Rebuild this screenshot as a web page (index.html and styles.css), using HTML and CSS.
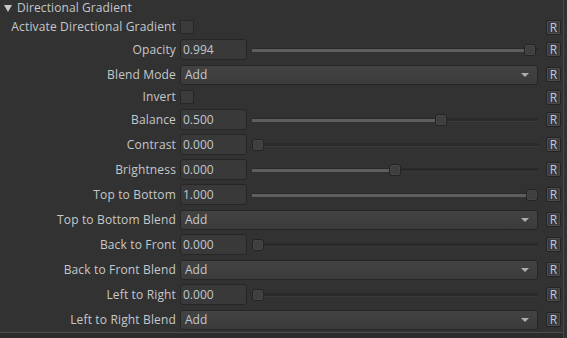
FILE: index.html
```html
<!DOCTYPE html>
<html>
<head>
<meta charset="utf-8">
<link rel="stylesheet" href="styles.css">
</head>
<body>
<div class="panel">
  <div class="header"><span class="tri"></span><span class="title">Directional Gradient</span></div>
  <div class="rows">
    <div class="row short"><div class="label">Activate Directional Gradient</div><div class="ctrl"><span class="check"></span></div><div class="rbtn">R</div></div>
    <div class="row"><div class="label">Opacity</div><div class="ctrl"><div class="num">0.994</div><div class="slider"><div class="track"><div class="fill" style="width: calc((100% - 12px) * 0.994 + 6px)"></div></div><div class="handle" style="left: calc((100% - 12px) * 0.994)"></div></div></div><div class="rbtn">R</div></div>
    <div class="row"><div class="label">Blend Mode</div><div class="ctrl"><div class="drop"><span>Add</span><span class="arrow"></span></div></div><div class="rbtn">R</div></div>
    <div class="row short"><div class="label">Invert</div><div class="ctrl"><span class="check"></span></div><div class="rbtn">R</div></div>
    <div class="row"><div class="label">Balance</div><div class="ctrl"><div class="num">0.500</div><div class="slider"><div class="track"><div class="fill" style="width: calc((100% - 12px) * 0.667 + 6px)"></div></div><div class="handle" style="left: calc((100% - 12px) * 0.667)"></div></div></div><div class="rbtn">R</div></div>
    <div class="row"><div class="label">Contrast</div><div class="ctrl"><div class="num">0.000</div><div class="slider"><div class="track"><div class="fill" style="width: 0px"></div></div><div class="handle" style="left: 0px"></div></div></div><div class="rbtn">R</div></div>
    <div class="row"><div class="label">Brightness</div><div class="ctrl"><div class="num">0.000</div><div class="slider"><div class="track"><div class="fill" style="width: calc((100% - 12px) * 0.5 + 6px)"></div></div><div class="handle" style="left: calc((100% - 12px) * 0.5)"></div></div></div><div class="rbtn">R</div></div>
    <div class="row"><div class="label">Top to Bottom</div><div class="ctrl"><div class="num">1.000</div><div class="slider"><div class="track"><div class="fill" style="width: calc(100% - 6px)"></div></div><div class="handle" style="left: calc(100% - 12px)"></div></div></div><div class="rbtn">R</div></div>
    <div class="row"><div class="label">Top to Bottom Blend</div><div class="ctrl"><div class="drop"><span>Add</span><span class="arrow"></span></div></div><div class="rbtn">R</div></div>
    <div class="row"><div class="label">Back to Front</div><div class="ctrl"><div class="num">0.000</div><div class="slider"><div class="track"><div class="fill" style="width: 0px"></div></div><div class="handle" style="left: 0px"></div></div></div><div class="rbtn">R</div></div>
    <div class="row"><div class="label">Back to Front Blend</div><div class="ctrl"><div class="drop"><span>Add</span><span class="arrow"></span></div></div><div class="rbtn">R</div></div>
    <div class="row"><div class="label">Left to Right</div><div class="ctrl"><div class="num">0.000</div><div class="slider"><div class="track"><div class="fill" style="width: 0px"></div></div><div class="handle" style="left: 0px"></div></div></div><div class="rbtn">R</div></div>
    <div class="row"><div class="label">Left to Right Blend</div><div class="ctrl"><div class="drop"><span>Add</span><span class="arrow"></span></div></div><div class="rbtn">R</div></div>
  </div>
  <div class="footer"></div>
</div>
</body>
</html>
```

FILE: styles.css
```css
html, body {
  margin: 0;
  padding: 0;
  background: #323232;
  width: 567px;
  height: 338px;
  overflow: hidden;
}
body {
  font-family: "Open Sans", "DejaVu Sans", sans-serif;
  font-size: 12px;
  color: #c6c8ca;
}
.panel {
  width: 563px;
  height: 338px;
  border-right: 1px solid #484848;
  box-sizing: content-box;
  display: flex;
  flex-direction: column;
}
.header {
  height: 16px;
  display: flex;
  align-items: center;
  padding-left: 4px;
}
.tri {
  width: 0;
  height: 0;
  border-left: 4px solid transparent;
  border-right: 4px solid transparent;
  border-top: 7px solid #c8c8c8;
  margin-right: 5px;
}
.title {
  line-height: 16px;
  letter-spacing: 0.1px;
}
.rows {
  display: flex;
  flex-direction: column;
  gap: 4px;
  padding-top: 3px;
}
.row {
  height: 21px;
  display: grid;
  grid-template-columns: 176px 358px 22px;
  column-gap: 4px;
  align-items: center;
}
.row.short {
  height: 16px;
}
.label {
  text-align: right;
  white-space: nowrap;
  line-height: 16px;
  letter-spacing: 0.15px;
}
.ctrl {
  display: flex;
  align-items: center;
  height: 100%;
}
.check {
  width: 12px;
  height: 12px;
  background: #3b3b3b;
  border: 1px solid #272727;
  display: block;
}
.num {
  width: 63px;
  height: 19px;
  background: #393939;
  border: 1px solid #262626;
  border-radius: 3px;
  color: #c0c8d2;
  line-height: 19px;
  padding-left: 2px;
  box-sizing: content-box;
  flex: none;
}
.slider {
  position: relative;
  flex: 1;
  height: 12px;
  margin-left: 5px;
  display: flex;
  align-items: center;
}
.track {
  width: 100%;
  height: 4px;
  background: #2a2a2a;
  border-bottom: 1px solid #3a3a3a;
  box-sizing: border-box;
  display: flex;
}
.fill {
  background: #5e5e5e;
  border-top: 1px solid #2a2a2a;
  box-sizing: border-box;
  height: 4px;
}
.handle {
  position: absolute;
  top: 0;
  width: 12px;
  height: 12px;
  box-sizing: border-box;
  background: #3f3f3f;
  border: 1px solid #232323;
  border-radius: 3px;
  box-shadow: inset 0 0 0 1px #474747;
}
.drop {
  width: 100%;
  height: 20px;
  box-sizing: border-box;
  background: linear-gradient(#434343, #3b3b3b);
  border: 1px solid #262626;
  border-radius: 3px;
  display: flex;
  align-items: center;
  justify-content: space-between;
  padding: 0 8px 0 4px;
  color: #c0c8d2;
}
.arrow {
  width: 0;
  height: 0;
  border-left: 4px solid transparent;
  border-right: 4px solid transparent;
  border-top: 4px solid #aeaeae;
}
.rbtn {
  width: 15px;
  height: 15px;
  margin-left: 4px;
  box-sizing: border-box;
  background: #3a3a3a;
  border: 1px solid #242424;
  border-radius: 2px;
  box-shadow: inset 0 0 0 1px #4c4c4c;
  color: #b8cde2;
  font-size: 12px;
  line-height: 13px;
  text-align: center;
}
.footer {
  margin-top: 2px;
  height: 5px;
  border-top: 1px solid #4e4e4e;
  background: #2c2c2c;
}
```
